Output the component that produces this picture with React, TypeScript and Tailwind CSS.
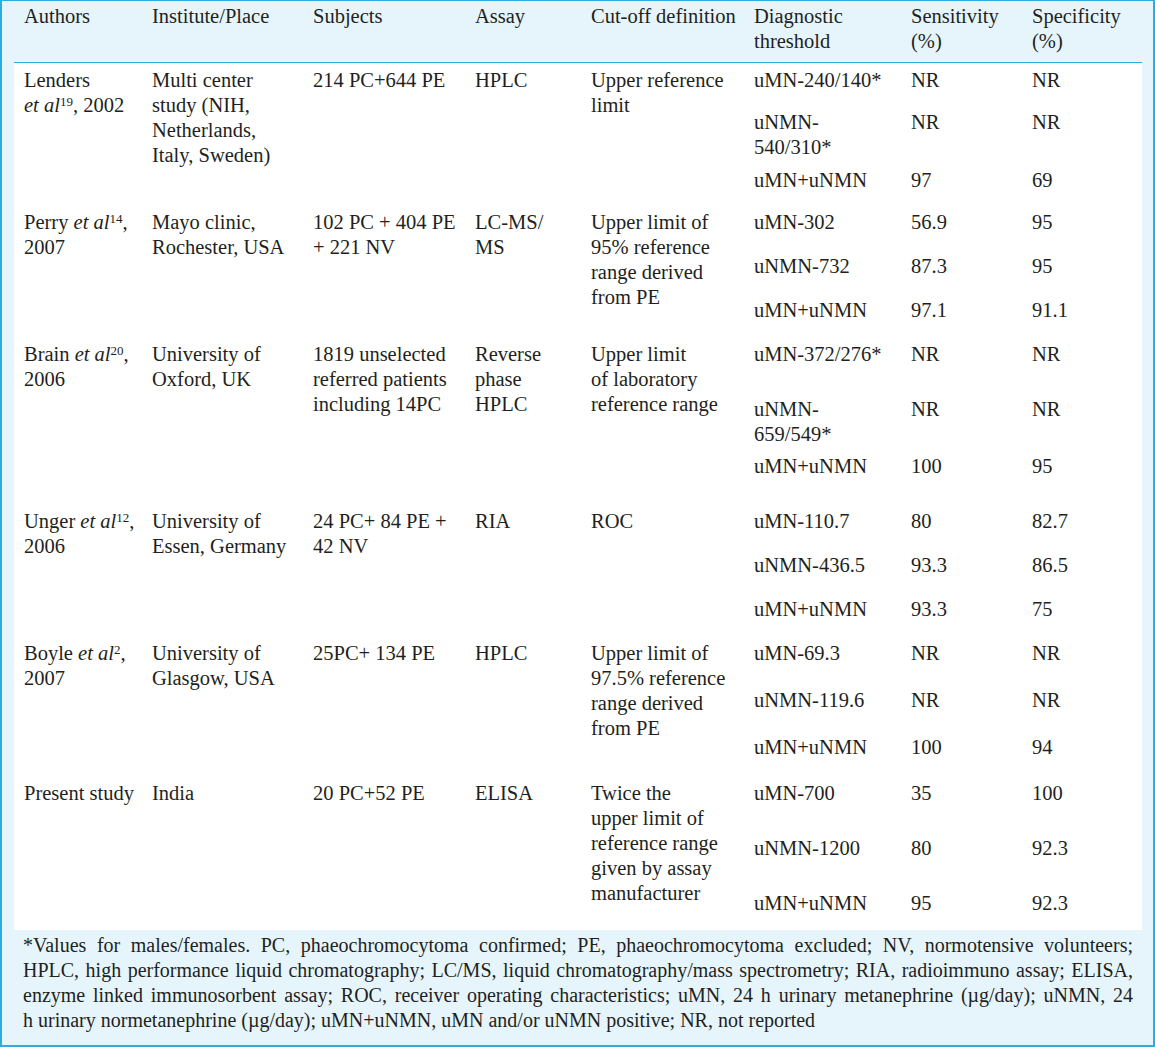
import React from 'react';

type Sub = { th: string[]; sens: string; spec: string; h?: number };

type Study = {
    author: React.ReactNode[];
    place: string[];
    subjects: string[];
    assay: string[];
    cutoff: string[];
    height: number;
    subs: Sub[];
};

const EtAl = ({ n }: { n: string }) => (
    <>
        <i>et al</i>
        <sup className="text-[13px]">{n}</sup>
    </>
);

const studies: Study[] = [
    {
        author: ['Lenders', <><EtAl n="19" />, 2002</>],
        place: ['Multi center', 'study (NIH,', 'Netherlands,', 'Italy, Sweden)'],
        subjects: ['214 PC+644 PE'],
        assay: ['HPLC'],
        cutoff: ['Upper reference', 'limit'],
        height: 142,
        subs: [
            { th: ['uMN-240/140*'], sens: 'NR', spec: 'NR', h: 42 },
            { th: ['uNMN-', '540/310*'], sens: 'NR', spec: 'NR', h: 58 },
            { th: ['uMN+uNMN'], sens: '97', spec: '69' },
        ],
    },
    {
        author: [<>Perry <EtAl n="14" />,</>, '2007'],
        place: ['Mayo clinic,', 'Rochester, USA'],
        subjects: ['102 PC + 404 PE', '+ 221 NV'],
        assay: ['LC-MS/', 'MS'],
        cutoff: ['Upper limit of', '95% reference', 'range derived', 'from PE'],
        height: 132,
        subs: [
            { th: ['uMN-302'], sens: '56.9', spec: '95', h: 44 },
            { th: ['uNMN-732'], sens: '87.3', spec: '95', h: 44 },
            { th: ['uMN+uNMN'], sens: '97.1', spec: '91.1' },
        ],
    },
    {
        author: [<>Brain <EtAl n="20" />,</>, '2006'],
        place: ['University of', 'Oxford, UK'],
        subjects: ['1819 unselected', 'referred patients', 'including 14PC'],
        assay: ['Reverse', 'phase', 'HPLC'],
        cutoff: ['Upper limit', 'of laboratory', 'reference range'],
        height: 167,
        subs: [
            { th: ['uMN-372/276*'], sens: 'NR', spec: 'NR', h: 55 },
            { th: ['uNMN-', '659/549*'], sens: 'NR', spec: 'NR', h: 57 },
            { th: ['uMN+uNMN'], sens: '100', spec: '95' },
        ],
    },
    {
        author: [<>Unger <EtAl n="12" />,</>, '2006'],
        place: ['University of', 'Essen, Germany'],
        subjects: ['24 PC+ 84 PE +', '42 NV'],
        assay: ['RIA'],
        cutoff: ['ROC'],
        height: 132,
        subs: [
            { th: ['uMN-110.7'], sens: '80', spec: '82.7', h: 44 },
            { th: ['uNMN-436.5'], sens: '93.3', spec: '86.5', h: 44 },
            { th: ['uMN+uNMN'], sens: '93.3', spec: '75' },
        ],
    },
    {
        author: [<>Boyle <EtAl n="2" />,</>, '2007'],
        place: ['University of', 'Glasgow, USA'],
        subjects: ['25PC+ 134 PE'],
        assay: ['HPLC'],
        cutoff: ['Upper limit of', '97.5% reference', 'range derived', 'from PE'],
        height: 140,
        subs: [
            { th: ['uMN-69.3'], sens: 'NR', spec: 'NR', h: 47 },
            { th: ['uNMN-119.6'], sens: 'NR', spec: 'NR', h: 47 },
            { th: ['uMN+uNMN'], sens: '100', spec: '94' },
        ],
    },
    {
        author: ['Present study'],
        place: ['India'],
        subjects: ['20 PC+52 PE'],
        assay: ['ELISA'],
        cutoff: ['Twice the', 'upper limit of', 'reference range', 'given by assay', 'manufacturer'],
        height: 154,
        subs: [
            { th: ['uMN-700'], sens: '35', spec: '100', h: 55 },
            { th: ['uNMN-1200'], sens: '80', spec: '92.3', h: 55 },
            { th: ['uMN+uNMN'], sens: '95', spec: '92.3' },
        ],
    },
];

const footerLines = [
    '*Values for males/females. PC, phaeochromocytoma confirmed; PE, phaeochromocytoma excluded; NV, normotensive volunteers;',
    'HPLC, high performance liquid chromatography; LC/MS, liquid chromatography/mass spectrometry; RIA, radioimmuno assay; ELISA,',
    'enzyme linked immunosorbent assay; ROC, receiver operating characteristics; uMN, 24 h urinary metanephrine (µg/day); uNMN, 24',
    'h urinary normetanephrine (µg/day); uMN+uNMN, uMN and/or uNMN positive; NR, not reported',
];

function Cell({ lines, w }: { lines: React.ReactNode[]; w: string }) {
    return (
        <div className={`${w} shrink-0 pl-[10px] whitespace-nowrap`}>
            {lines.map((l, i) => (
                <div key={i}>{l}</div>
            ))}
        </div>
    );
}

export default function App() {
    return (
        <div
            className="w-[1155px] h-[1047px] bg-[#e6f5fc] border-x-2 border-b-2 border-t border-[#2aaee2] text-[20.5px] leading-[25px] text-[#231f20] overflow-hidden"
            style={{ fontFamily: '"Liberation Serif", "Times New Roman", serif' }}
        >
            {/* Header */}
            <div className="h-[61px] pt-[3px] pl-[12px] flex">
                <Cell w="w-[128px]" lines={['Authors']} />
                <Cell w="w-[161px]" lines={['Institute/Place']} />
                <Cell w="w-[162px]" lines={['Subjects']} />
                <Cell w="w-[116px]" lines={['Assay']} />
                <Cell w="w-[163px]" lines={['Cut-off definition']} />
                <Cell w="w-[157px]" lines={['Diagnostic', 'threshold']} />
                <Cell w="w-[121px]" lines={['Sensitivity', '(%)']} />
                <Cell w="w-[120px]" lines={['Specificity', '(%)']} />
            </div>

            {/* Body */}
            <div className="ml-[12px] w-[1128px] bg-white border-t border-[#2aaee2]">
                {studies.map((s, i) => (
                    <div key={i} className="flex pt-[5px]" style={{ height: s.height }}>
                        <Cell w="w-[128px]" lines={s.author} />
                        <Cell w="w-[161px]" lines={s.place} />
                        <Cell w="w-[162px]" lines={s.subjects} />
                        <Cell w="w-[116px]" lines={s.assay} />
                        <Cell w="w-[163px]" lines={s.cutoff} />
                        <div className="flex flex-col">
                            {s.subs.map((sub, j) => (
                                <div key={j} className="flex" style={sub.h ? { height: sub.h } : undefined}>
                                    <Cell w="w-[157px]" lines={sub.th} />
                                    <Cell w="w-[121px]" lines={[sub.sens]} />
                                    <Cell w="w-[120px]" lines={[sub.spec]} />
                                </div>
                            ))}
                        </div>
                    </div>
                ))}
            </div>

            {/* Footnote */}
            <div className="pt-[3px] pl-[21px] pr-[20px] text-[20px]">
                {footerLines.map((l, i) => (
                    <div
                        key={i}
                        className={
                            i < footerLines.length - 1
                                ? 'whitespace-nowrap text-justify [text-align-last:justify]'
                                : 'whitespace-nowrap text-left'
                        }
                    >
                        {l}
                    </div>
                ))}
            </div>
        </div>
    );
}
